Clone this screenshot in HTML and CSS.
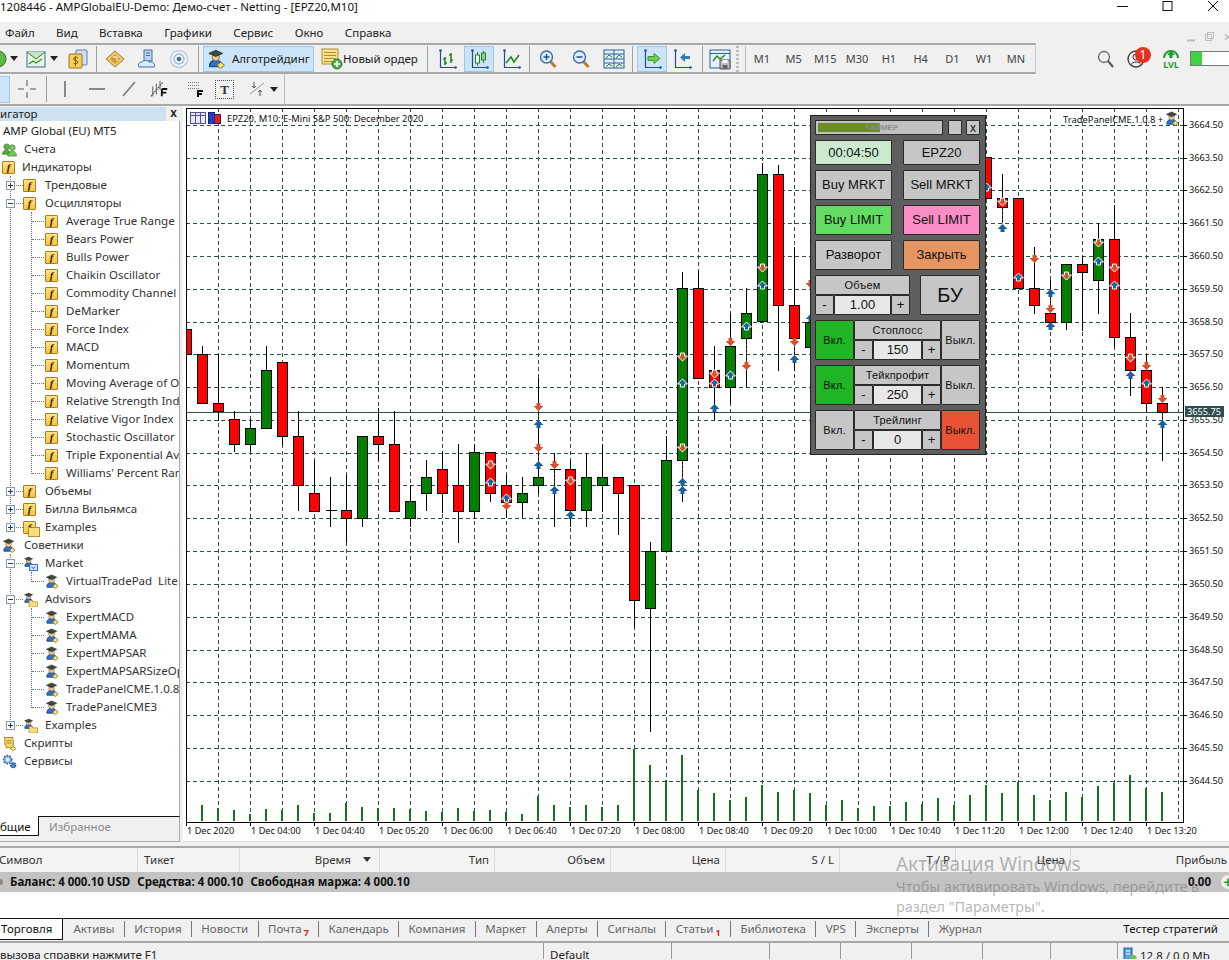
FILE: index.html
```html
<!DOCTYPE html>
<html lang="ru">
<head>
<meta charset="utf-8">
<title>MetaTrader 5</title>
<link rel="stylesheet" href="styles.css">
</head>
<body>
<svg class="defs" aria-hidden="true">
  <symbol id="axes" viewBox="0 0 20 20"><path d="M3.500 1v17.500H19" fill="none" stroke="#1d4f9a" stroke-width="1.200"/><circle cx="3.500" cy="1.500" r="1.300" fill="#1d4f9a"/><circle cx="18.500" cy="18.500" r="1.300" fill="#1d4f9a"/></symbol>
  <symbol id="hat" viewBox="0 0 16 16"><path d="M2 14c0-4 2-5 5-5s5 1 5 5z" fill="#2f6fc4" stroke="#1c4788"/><circle cx="7" cy="6.500" r="3" fill="#e8c9a0" stroke="#7a5a3a" stroke-width=".6"/><path d="M1.500 3.500 7 1l5.500 2.500L7 6z" fill="#3d4a3d" stroke="#202820" stroke-width=".6"/><path d="M11 10.500l3 2.500-3 2.500-3-2.500z" fill="#f6e27a" stroke="#8a7420" stroke-width=".8"/></symbol>
  <symbol id="hatfolder" viewBox="0 0 16 16"><path d="M2 11c0-3 2-4 4-4s4 1 4 4z" fill="#2f6fc4" stroke="#1c4788"/><circle cx="6" cy="5" r="2.500" fill="#e8c9a0" stroke="#7a5a3a" stroke-width=".6"/><path d="M1 3 6 .8 11 3 6 5.200z" fill="#3d4a3d"/><path d="M6.500 9h3l1 1.500h5V16h-9z" fill="#f7dc7c" stroke="#b08f30" stroke-width=".8"/></symbol>
  <symbol id="hatcal" viewBox="0 0 16 16"><path d="M2 11c0-3 2-4 4-4s4 1 4 4z" fill="#2f6fc4" stroke="#1c4788"/><circle cx="6" cy="5" r="2.500" fill="#e8c9a0" stroke="#7a5a3a" stroke-width=".6"/><path d="M1 3 6 .8 11 3 6 5.200z" fill="#3d4a3d"/><rect x="7" y="9" width="8.500" height="6.500" fill="#cfe4f7" stroke="#2f6fc4"/><path d="M9 11.500l2 2 2-2" fill="none" stroke="#1c4788"/></symbol>
  <symbol id="people" viewBox="0 0 16 16"><circle cx="5" cy="5" r="3" fill="#62b04a" stroke="#2f7a22" stroke-width=".7"/><circle cx="11" cy="6" r="3" fill="#7cc85c" stroke="#2f7a22" stroke-width=".7"/><path d="M0.500 13c0-3 2-4.500 4.500-4.500S9 10 9 13z" fill="#5aa842" stroke="#2f7a22" stroke-width=".7"/><path d="M6 15c0-3 2.500-5 5-5s4.500 2 4.500 5z" fill="#79c65a" stroke="#2f7a22" stroke-width=".7"/></symbol>
  <symbol id="scroll" viewBox="0 0 16 16"><path d="M2 1.500h10c-1 1-1 2 0 3v8H4c1-1 1-2 0-3H3V4C3 3 3 2 2 1.500z" fill="#f5d76a" stroke="#a27f1e"/><path d="M5 5h5M5 7.500h5" stroke="#a27f1e"/><path d="M12 11l3 2.500-3 2.500-3-2.500z" fill="#f6e27a" stroke="#8a7420" stroke-width=".8"/></symbol>
  <symbol id="gears" viewBox="0 0 16 16"><circle cx="6" cy="6" r="4.200" fill="#9ec6ea" stroke="#2a64a8" stroke-width="1.800" stroke-dasharray="2 1"/><circle cx="6" cy="6" r="1.500" fill="#fff"/><circle cx="12" cy="12" r="2.700" fill="#4a86c8" stroke="#1c4f94" stroke-width="1.300" stroke-dasharray="1.500 .8"/></symbol>
  <symbol id="magnifier" viewBox="0 0 20 20"><path d="M12 12l5.500 6" stroke="#c07a30" stroke-width="3"/><circle cx="8.500" cy="8" r="6" fill="#dcecf9" stroke="#3a6ea8" stroke-width="1.400"/></symbol>
</svg>

<header class="chrome">
  <div class="titlebar">
    <span class="title">1208446 - AMPGlobalEU-Demo: Демо-счет - Netting - [EPZ20,M10]</span>
    <div class="winbtns">
      <svg class="winbtn" viewBox="0 0 45 12"><path d="M17 6.500h11" stroke="#111"/></svg>
      <svg class="winbtn" viewBox="0 0 45 12"><rect x="18" y="1.500" width="9" height="9" fill="none" stroke="#111"/></svg>
      <svg class="winbtn" viewBox="0 0 45 12"><path d="M18 1l10 10M28 1 18 11" stroke="#111"/></svg>
    </div>
  </div>
  <nav class="menubar">
    <span>Файл</span><span>Вид</span><span>Вставка</span><span>Графики</span><span>Сервис</span><span>Окно</span><span>Справка</span>
    <svg class="mdi" viewBox="0 0 48 10"><path d="M0 8.500h8" stroke="#bdbdbd" stroke-width="2"/><rect x="18.500" y="2.500" width="6" height="6" fill="none" stroke="#bdbdbd"/><rect x="20.500" y=".5" width="6" height="6" fill="none" stroke="#bdbdbd"/><path d="M38 2l6 6M44 2l-6 6" stroke="#bdbdbd" stroke-width="1.400"/></svg>
  </nav>

  <div class="row1">
    <div class="toolbar">
      <svg class="ic8" viewBox="12 0 8 20"><circle cx="10" cy="10" r="8" fill="#58b848" stroke="#2f7a22"/></svg>
      <span class="drop ml2"></span>
      <svg class="ic20 ml8" viewBox="0 0 20 20"><rect x="1" y="3" width="18" height="15" fill="#e8f2e8" stroke="#2f7a8a"/><path d="M1 3l9 7 9-7" fill="#c8e4c4" stroke="#2f7a22"/><path d="M3 15l4-3 3 2 6-4" fill="none" stroke="#2f9a22" stroke-width="1.400"/></svg>
      <span class="drop ml4"></span>
      <svg class="ic20 ml10" viewBox="0 0 20 20"><rect x="8" y="1" width="11" height="15" rx="1" fill="#cfe0f4" stroke="#5a80b0"/><rect x="1" y="5" width="13" height="14" rx="1" fill="#f7cf5a" stroke="#9a7418"/><path d="M7.500 7v10M10 9c-1-1-4.500-1-4.500 1s4.500 1 4.500 3-3.500 2-4.500 1" fill="none" stroke="#7a5a10"/></svg>
      <i class="sep ml8"></i>
      <svg class="ic20 ml8" viewBox="0 0 20 20"><path d="M1 10 10 2l9 8-9 8z" fill="#eccb72" stroke="#a27f1e"/><path d="M5 10l5-5 5 5-5 5z" fill="#d49a30"/><path d="M8 8h4v4" fill="none" stroke="#fff"/></svg>
      <svg class="ic20 ml12" viewBox="0 0 20 20"><rect x="7" y="1" width="8" height="11" fill="#bcd6f2" stroke="#3a6ea8"/><path d="M9 4h4M9 6.500h4" stroke="#3a6ea8"/><path d="M2 18c-2-3 1-5 3-5 1-2 6-2 7 0 3-1 7 2 5 5z" fill="#dcecf9" stroke="#3a6ea8"/></svg>
      <svg class="ic20 ml12" viewBox="0 0 20 20"><circle cx="10" cy="10" r="2.300" fill="#3a6ea8"/><circle cx="10" cy="10" r="5" fill="none" stroke="#9fbde0" stroke-width="1.300"/><circle cx="10" cy="10" r="8.500" fill="none" stroke="#b8cce4" stroke-width="1.300"/></svg>
      <i class="sep ml9"></i>
      <button class="algo ml4"><svg class="ic20" viewBox="0 0 16 16"><use href="#hat"/></svg>Алготрейдинг</button>
      <button class="order ml6"><svg class="ic22" viewBox="0 0 22 22"><rect x="1" y="1" width="16" height="15" fill="#f7e18a" stroke="#b08f30"/><path d="M3 4.500h12M3 7.500h12M3 10.500h12M3 13.500h8" stroke="#b08f30"/><circle cx="16" cy="16" r="5" fill="#4fae4f" stroke="#2c7a2c"/><path d="M16 13v6M13 16h6" stroke="#fff" stroke-width="1.600"/></svg>Новый ордер</button>
      <i class="sep ml10"></i>
      <svg class="ic20 ml9" viewBox="0 0 20 20"><use href="#axes"/><path d="M8 8v8M6 10h2M8 14h2M14 4v10M12 6h2M14 11h2" stroke="#1e8a1e" stroke-width="1.600" fill="none"/></svg>
      <span class="tool on ml7"><svg class="ic20" viewBox="0 0 20 20"><use href="#axes"/><path d="M8.500 3v14M14.500 2v12" stroke="#1e8a1e"/><rect x="6.500" y="6" width="4" height="8" fill="#fff" stroke="#1e8a1e"/><rect x="12.500" y="4" width="4" height="7" fill="#8fd08f" stroke="#1e8a1e"/></svg></span>
      <svg class="ic20 ml7" viewBox="0 0 20 20"><use href="#axes"/><path d="M5 14l5-6 3 5 5-7" stroke="#1e8a1e" stroke-width="1.600" fill="none"/></svg>
      <i class="sep ml8"></i>
      <svg class="ic20 ml8" viewBox="0 0 20 20"><use href="#magnifier"/><path d="M8.500 5v6M5.500 8h6" stroke="#1d4f9a" stroke-width="1.500"/></svg>
      <svg class="ic20 ml13" viewBox="0 0 20 20"><use href="#magnifier"/><path d="M5.500 8h6" stroke="#1d4f9a" stroke-width="1.500"/></svg>
      <svg class="ic22 ml12" viewBox="0 0 22 22"><rect x="1" y="2" width="20" height="18" fill="#e6f0fa" stroke="#2f5f9a"/><path d="M11 2v18M1 11h20M1 6h20M1 15h20" stroke="#2f5f9a"/><path d="M3 10l3-3 3 2M13 10l3-3 3 2M3 19l3-3 3 2M13 19l3-3 3 2" fill="none" stroke="#1e8a1e"/></svg>
      <i class="sep ml7"></i>
      <span class="tool on ml4"><svg class="ic20" viewBox="0 0 20 20"><use href="#axes"/><path d="M6 7.500h6V4.500l6 5-6 5v-3H6z" fill="#6fcf4f" stroke="#3a9a2a"/></svg></span>
      <svg class="ic20 ml5" viewBox="0 0 20 20"><use href="#axes"/><path d="M18 7h-5V4l-5 4.500 5 4.500v-3h5z" fill="#2f7cc4"/></svg>
      <i class="sep ml10"></i>
      <svg class="ic22 ml6" viewBox="0 0 22 22"><rect x="1" y="2" width="20" height="18" fill="#e6f0fa" stroke="#2f5f9a"/><path d="M1 5.500h20" stroke="#2f5f9a"/><path d="M4 13l4-5 3 3 5-4" fill="none" stroke="#1e8a1e" stroke-width="1.400"/><path d="M11 12h10v9H11z" fill="#bdbdbd" stroke="#555"/><rect x="13.500" y="12" width="5" height="3" fill="#fff"/><rect x="13.500" y="17" width="5" height="4" fill="#666"/></svg>
      <i class="grip ml5"></i>
      <div class="periods"><span>M1</span><span>M5</span><span>M15</span><span>M30</span><span>H1</span><span>H4</span><span>D1</span><span>W1</span><span>MN</span></div>
    </div>
    <div class="statusicons">
      <svg class="ic18" viewBox="0 0 18 18"><circle cx="7" cy="7" r="5.500" fill="none" stroke="#666" stroke-width="1.300"/><path d="M11 11l5 6" stroke="#555" stroke-width="2"/></svg>
      <div class="user">
        <svg class="ic18" viewBox="0 0 18 18"><circle cx="9" cy="9" r="8" fill="none" stroke="#333" stroke-width="1.300"/><circle cx="9" cy="7" r="3" fill="none" stroke="#333"/><path d="M4 15c1-4 9-4 10 0" fill="none" stroke="#333"/></svg>
        <span class="badge">1</span>
      </div>
      <div class="lvl"><svg class="ic18h" viewBox="0 0 18 12"><path d="M2 10a7 7 0 0 1 14 0" fill="none" stroke="#17a02c" stroke-width="2"/><path d="M9 3l4 4h-2.500v3h-3V7H5z" fill="#17a02c"/></svg><span>LVL</span></div>
      <div class="progress"><i></i></div>
    </div>
  </div>

  <div class="row2">
    <div class="toolbar2">
      <span class="selstub"></span>
      <svg class="ic20 ml7" viewBox="0 0 20 20"><path d="M10 1v6M10 13v6M1 10h6M13 10h6" stroke="#555"/></svg>
      <i class="sep ml9"></i>
      <svg class="ic20 ml8" viewBox="0 0 20 20"><path d="M10 2v16" stroke="#666" stroke-width="1.500"/></svg>
      <svg class="ic20 ml12" viewBox="0 0 20 20"><path d="M2 10h16" stroke="#666" stroke-width="1.500"/></svg>
      <svg class="ic20 ml12" viewBox="0 0 20 20"><path d="M4 17 16 3" stroke="#777" stroke-width="1.500"/></svg>
      <svg class="ic20 ml11" viewBox="0 0 22 20"><path d="M1 18 14 3" stroke="#555" stroke-width="1.300" stroke-dasharray="2 1"/><path d="M3 7v11M7 4v12M11 1v10" stroke="#555"/><path d="M13 10h6M13 14h5M13 10v8M13 18h0" stroke="#111" stroke-width="2"/></svg>
      <svg class="ic20 ml16" viewBox="0 0 20 20"><path d="M2 3.500h12M2 6.500h12M2 9.500h12" stroke="#777" stroke-dasharray="1 1"/><path d="M11 12h6M11 15h5M12 12v6" stroke="#111" stroke-width="2" fill="none"/></svg>
      <span class="textic ml9">T</span>
      <svg class="ic18 ml14" viewBox="0 0 18 18"><path d="M2 14 16 3" stroke="#999"/><path d="M6 2v6M4 6l2 2 2-2" fill="none" stroke="#555"/><path d="M12 16v-6M10 12l2-2 2 2" fill="none" stroke="#555"/></svg>
      <span class="drop ml4"></span>
    </div>
  </div>
</header>

<main class="main">
  <aside class="navigator">
    <div class="navhead"><span class="navtitle">игатор</span><b class="navclose">x</b></div>
    <div class="tree">
      <div class="r root">AMP Global (EU) MT5</div>
      <div class="r r0"><svg class="ti"><use href="#people"/></svg>Счета</div>
      <div class="r r0"><i class="fi"></i>Индикаторы</div>
      <div class="branch">
        <div class="r r1"><i class="exp plus"></i><i class="fi"></i>Трендовые</div>
        <div class="r r1"><i class="exp"></i><i class="fi"></i>Осцилляторы</div>
        <div class="sub">
          <div class="r r2"><i class="fi"></i>Average True Range</div>
          <div class="r r2"><i class="fi"></i>Bears Power</div>
          <div class="r r2"><i class="fi"></i>Bulls Power</div>
          <div class="r r2"><i class="fi"></i>Chaikin Oscillator</div>
          <div class="r r2"><i class="fi"></i>Commodity Channel Index</div>
          <div class="r r2"><i class="fi"></i>DeMarker</div>
          <div class="r r2"><i class="fi"></i>Force Index</div>
          <div class="r r2"><i class="fi"></i>MACD</div>
          <div class="r r2"><i class="fi"></i>Momentum</div>
          <div class="r r2"><i class="fi"></i>Moving Average of Oscillator</div>
          <div class="r r2"><i class="fi"></i>Relative Strength Index</div>
          <div class="r r2"><i class="fi"></i>Relative Vigor Index</div>
          <div class="r r2"><i class="fi"></i>Stochastic Oscillator</div>
          <div class="r r2"><i class="fi"></i>Triple Exponential Average</div>
          <div class="r r2"><i class="fi"></i>Williams' Percent Range</div>
        </div>
        <div class="r r1"><i class="exp plus"></i><i class="fi"></i>Объемы</div>
        <div class="r r1"><i class="exp plus"></i><i class="fi"></i>Билла Вильямса</div>
        <div class="r r1"><i class="exp plus"></i><i class="fi fold"></i>Examples</div>
      </div>
      <div class="r r0"><svg class="ti"><use href="#hat"/></svg>Советники</div>
      <div class="branch">
        <div class="r r1"><i class="exp"></i><svg class="ti"><use href="#hatcal"/></svg>Market</div>
        <div class="sub">
          <div class="r r2"><svg class="ti"><use href="#hat"/></svg>VirtualTradePad&nbsp; Lite</div>
        </div>
        <div class="r r1"><i class="exp"></i><svg class="ti"><use href="#hatfolder"/></svg>Advisors</div>
        <div class="sub">
          <div class="r r2"><svg class="ti"><use href="#hat"/></svg>ExpertMACD</div>
          <div class="r r2"><svg class="ti"><use href="#hat"/></svg>ExpertMAMA</div>
          <div class="r r2"><svg class="ti"><use href="#hat"/></svg>ExpertMAPSAR</div>
          <div class="r r2"><svg class="ti"><use href="#hat"/></svg>ExpertMAPSARSizeOptimized</div>
          <div class="r r2"><svg class="ti"><use href="#hat"/></svg>TradePanelCME.1.0.8</div>
          <div class="r r2"><svg class="ti"><use href="#hat"/></svg>TradePanelCME3</div>
        </div>
        <div class="r r1"><i class="exp plus"></i><svg class="ti"><use href="#hatfolder"/></svg>Examples</div>
      </div>
      <div class="r r0"><svg class="ti"><use href="#scroll"/></svg>Скрипты</div>
      <div class="r r0"><svg class="ti"><use href="#gears"/></svg>Сервисы</div>
    </div>
    <div class="navtabs"><span class="navtab on">бщие</span><span class="navtab">Избранное</span></div>
  </aside>

  <section class="chartwrap">
    <svg id="chart" class="chart" viewBox="183 106 1046 736" xmlns="http://www.w3.org/2000/svg"></svg>
    <div class="panel">
      <div class="p-head">
        <div class="p-timer"><i></i><span>ТАЙМЕР</span></div>
        <button class="p-btn p-sq"></button>
        <button class="p-btn p-sq">x</button>
      </div>
      <div class="p-two p-h25"><div class="p-btn mint">00:04:50</div><div class="p-btn">EPZ20</div></div>
      <div class="p-two p-h30"><div class="p-btn">Buy MRKT</div><div class="p-btn">Sell MRKT</div></div>
      <div class="p-two p-h30"><div class="p-btn green">Buy LIMIT</div><div class="p-btn pink">Sell LIMIT</div></div>
      <div class="p-two p-h30"><div class="p-btn">Разворот</div><div class="p-btn orange">Закрыть</div></div>
      <div class="p-vol">
        <div class="p-spin"><div class="p-btn p-small">Объем</div><div class="p-spinrow"><div class="p-btn">-</div><div class="p-btn val">1.00</div><div class="p-btn">+</div></div></div>
        <div class="p-btn p-bu">БУ</div>
      </div>
      <div class="p-risk">
        <div class="p-btn p-small vgreen">Вкл.</div>
        <div class="p-spin"><div class="p-btn p-small">Стоплосс</div><div class="p-spinrow"><div class="p-btn">-</div><div class="p-btn val">150</div><div class="p-btn">+</div></div></div>
        <div class="p-btn p-small">Выкл.</div>
      </div>
      <div class="p-risk">
        <div class="p-btn p-small vgreen">Вкл.</div>
        <div class="p-spin"><div class="p-btn p-small">Тейкпрофит</div><div class="p-spinrow"><div class="p-btn">-</div><div class="p-btn val">250</div><div class="p-btn">+</div></div></div>
        <div class="p-btn p-small">Выкл.</div>
      </div>
      <div class="p-risk">
        <div class="p-btn p-small">Вкл.</div>
        <div class="p-spin"><div class="p-btn p-small">Трейлинг</div><div class="p-spinrow"><div class="p-btn">-</div><div class="p-btn val">0</div><div class="p-btn">+</div></div></div>
        <div class="p-btn p-small vred">Выкл.</div>
      </div>
    </div>
  </section>
</main>

<footer class="bottom">
  <div class="thead">
    <span class="tl first">Символ</span><span class="tl">Тикет</span><span class="sorted">Время<i></i></span><span>Тип</span><span>Объем</span><span>Цена</span><span>S / L</span><span>T / P</span><span>Цена</span><span class="last">Прибыль</span>
  </div>
  <div class="balance">
    <i class="dot"></i><b>Баланс: 4 000.10 USD</b><b>Средства: 4 000.10</b><b>Свободная маржа: 4 000.10</b>
    <b class="profit">0.00</b><span class="plus-round">+</span>
  </div>
  <div class="blank"></div>
  <div class="tabs">
    <span class="tab sel">Торговля</span><span class="tab">Активы</span><span class="tab">История</span><span class="tab">Новости</span><span class="tab">Почта<sub>7</sub></span><span class="tab">Календарь</span><span class="tab">Компания</span><span class="tab">Маркет</span><span class="tab">Алерты</span><span class="tab">Сигналы</span><span class="tab">Статьи<sub>1</sub></span><span class="tab">Библиотека</span><span class="tab">VPS</span><span class="tab">Эксперты</span><span class="tab nosep">Журнал</span>
    <span class="tester">Тестер стратегий</span>
  </div>
  <div class="status">
    <span class="s-help">вызова справки нажмите F1</span><span class="s-def">Default</span><span class="s-a"></span><span class="s-b"></span><span class="s-c"></span><span class="s-c"></span><span class="s-d"></span><span class="s-e"></span>
    <span class="s-mem"><svg class="ic14" viewBox="0 0 14 14"><rect x="1" y="1" width="8" height="12" fill="#5aa0e0" stroke="#1c5a9a"/><path d="M3 4h4M3 7h4" stroke="#fff"/><circle cx="10.500" cy="11" r="3" fill="#6fc04f"/></svg>12.8 / 0.0 Mb</span>
  </div>
  <div class="activation">
    <div class="a-big">Активация Windows</div>
    <div class="a-small">Чтобы активировать Windows, перейдите в<br>раздел "Параметры".</div>
  </div>
</footer>
<script src="chart.js"></script>
</body>
</html>
```

FILE: styles.css
```css
* { box-sizing: border-box; }
html, body { margin: 0; height: 960px; }
body {
  width: 1229px;
  overflow: hidden;
  display: flex;
  flex-direction: column;
  background: #f0f0f0;
  color: #1a1a1a;
  font: 11.500px/16px "Noto Sans", "Liberation Sans", sans-serif;
}
.defs { position: absolute; width: 0; height: 0; }
button { font: inherit; color: inherit; padding: 0; }
i { font-style: normal; display: block; flex: none; }
svg { flex: none; display: block; }

.ml2 { margin-left: 2px; } .ml4 { margin-left: 4px; } .ml5 { margin-left: 5px; }
.ml6 { margin-left: 6px; } .ml7 { margin-left: 7px; } .ml8 { margin-left: 8px; }
.ml9 { margin-left: 9px; } .ml10 { margin-left: 10px; } .ml11 { margin-left: 11px; }
.ml12 { margin-left: 12px; } .ml13 { margin-left: 13px; } .ml14 { margin-left: 14px; }
.ml16 { margin-left: 16px; }

.ic8 { width: 8px; height: 20px; }
.ic14 { width: 14px; height: 14px; }
.ic18 { width: 18px; height: 18px; }
.ic18h { width: 18px; height: 12px; }
.ic20 { width: 20px; height: 20px; }
.ic22 { width: 22px; height: 22px; }

/* window chrome */
.chrome { flex: none; height: 106px; }
.titlebar { height: 22px; background: #fff; display: flex; justify-content: space-between; }
.title { line-height: 14px; color: #111; white-space: nowrap; }
.winbtns { display: flex; margin-right: -6px; }
.winbtn { width: 45px; height: 12px; }
.menubar { height: 21px; display: flex; align-items: center; gap: 21.400px; padding-left: 5px; color: #222; }
.mdi { width: 48px; height: 10px; margin-left: auto; margin-top: 8px; margin-right: -6px; }
.row1 { height: 31px; display: flex; justify-content: space-between; }
.toolbar {
  width: 1036px; display: flex; align-items: center;
  border-bottom: 2px solid #a8a8a8; border-right: 1px solid #c8c8c8;
  border-top: 2px solid #a8a8a8;
}
.drop { flex: none; width: 0; height: 0; border: 4px solid transparent; border-top: 5px solid #222; border-bottom: 0; }
.sep { width: 1px; height: 26px; background: #a0a0a0; }
.algo, .order { flex: none; height: 26px; display: flex; align-items: center; border: 1px solid transparent; background: none; white-space: nowrap; }
.algo { width: 111px; padding-left: 3px; gap: 5px; background: #cce4f7; border-color: #9ac8ee; }
.order { width: 97px; gap: 0; }
.tool { flex: none; width: 30px; height: 26px; display: flex; align-items: center; justify-content: center; }
.tool.on { background: #cce4f7; border: 1px solid #9ac8ee; }
.grip { width: 3px; height: 26px; background: repeating-linear-gradient(#bbb 0 2px, transparent 2px 4px); }
.periods { display: flex; margin-left: 6px; border-left: 1px solid #bbb; height: 26px; align-items: center; color: #444; font-size: 11px; }
.periods span { width: 31.750px; text-align: center; }
.statusicons { display: flex; align-items: center; }
.user { position: relative; width: 26px; margin-left: 12px; }
.badge { position: absolute; left: 8px; top: -3px; width: 16px; height: 16px; border-radius: 50%; background: #e0341c; color: #fff; text-align: center; font-size: 12px; line-height: 16px; }
.lvl { width: 18px; margin-left: 9px; color: #17a02c; font-size: 9px; line-height: 9px; font-weight: 700; text-align: center; }
.progress { width: 39px; height: 15px; margin-left: 10px; background: #fff; border: 1px solid #777; border-right: 0; }
.progress i { width: 11px; height: 100%; background: #42d13e; }
.row2 { height: 32px; border-bottom: 2px solid #a8a8a8; }
.toolbar2 { width: 285px; height: 30px; display: flex; align-items: center; border-right: 1px solid #bbb; }
.selstub { flex: none; width: 10px; height: 27px; background: #cce4f7; border: 1px solid #9ac8ee; border-left: 0; }
.textic { flex: none; width: 19px; height: 19px; text-align: center; border: 1px dotted #555; font: 700 13px/17px "Liberation Serif", serif; color: #333; }

/* main */
.main { flex: none; height: 736px; display: flex; }
.navigator { width: 183px; display: flex; flex-direction: column; background: #f0f0f0; border-right: 3px solid #f0f0f0; }
.navhead { height: 14px; display: flex; justify-content: space-between; padding-right: 3px; margin-top: 1px; }
.navtitle { width: 166px; background: #cfe0ee; line-height: 13px; color: #222; }
.navclose { font: 700 12px/12px "Liberation Sans", sans-serif; }
.tree { flex: 1; width: 180px; background: #fff; padding-top: 1px; overflow: hidden; border-right: 1px solid #a8a8a8; color: #333; white-space: nowrap; }
.r { height: 18px; line-height: 18px; position: relative; display: flex; align-items: center; }
.root { padding-left: 3px; color: #222; }
.r0 { padding-left: 2px; gap: 7px; }
.branch { margin-left: 10px; border-left: 1px dotted #777; }
.sub { margin-left: 20px; border-left: 1px dotted #777; }
.r1 { padding-left: 12px; gap: 9px; }
.r2 { padding-left: 13px; gap: 8px; }
.r1 .ti, .r2 .ti { margin-right: -2px; }
.r1::before, .r2::before { content: ""; position: absolute; left: 0; top: 9px; width: 12px; border-top: 1px dotted #777; }
.branch > .r1:last-child::after, .sub > .r2:last-child::after { content: ""; position: absolute; left: -1px; top: 10px; height: 8px; width: 1px; background: #fff; }
.exp { position: absolute; left: -5px; top: 5px; width: 9px; height: 9px; background: #fff; border: 1px solid #8a9aa8; z-index: 1; }
.exp::before { content: ""; position: absolute; left: 1px; right: 1px; top: 3px; height: 1px; background: #223a6a; }
.exp.plus::after { content: ""; position: absolute; top: 1px; bottom: 1px; left: 3px; width: 1px; background: #223a6a; }
.ti { width: 15px; height: 15px; }
.fi { width: 13px; height: 13px; background: linear-gradient(#ffe48a, #f7c33c); border: 1px solid #a8801e; border-radius: 1px; position: relative; }
.fi::before { content: "f"; position: absolute; inset: -1px 0 0; font: italic 700 11px/12px "Liberation Serif", serif; text-align: center; color: #3a2a00; }
.fi.fold::after { content: ""; position: absolute; right: -5px; bottom: -4px; width: 10px; height: 8px; background: #f7dc7c; border: 1px solid #b08f30; }
.navtabs { height: 26px; width: 180px; flex: none; background: #f0f0f0; display: flex; border-top: 1px solid #111; border-right: 1px solid #a8a8a8; border-bottom: 1px solid #a8a8a8; gap: 10px; padding-bottom: 5px; }
.navtab { line-height: 19px; color: #888; }
.navtab.on { width: 39px; background: #fff; color: #111; border-right: 1px solid #111; border-bottom: 1px solid #111; margin-top: -1px; padding-top: 1px; }

.chartwrap { flex: 1; position: relative; background: #fff; border-bottom: 1px solid #ddd; }
.chart { width: 1046px; height: 736px; }
.g { stroke: #2f4f4f; stroke-width: 1; stroke-dasharray: 4 3; shape-rendering: crispEdges; }
.bid { stroke: #2f4f4f; stroke-width: 1; shape-rendering: crispEdges; }
.frame { fill: none; stroke: #000; stroke-width: 1; shape-rendering: crispEdges; }
.wick { stroke: #000; stroke-width: 1; shape-rendering: crispEdges; }
.body-r { fill: #f00; stroke: #000; shape-rendering: crispEdges; }
.body-g { fill: #008000; stroke: #000; shape-rendering: crispEdges; }
.vol { fill: #17701f; shape-rendering: crispEdges; }
.sell { fill: #d8512c; }
.buy { fill: #16629f; }
.onbody { stroke: #fff; stroke-width: 1; }
.lnk { stroke: #d8512c; stroke-width: 1; stroke-dasharray: 2 2; opacity: .5; }
.axis { font: 9.200px "Noto Sans", sans-serif; fill: #111; }
.info { font: 9.400px "Noto Sans", sans-serif; fill: #111; }
.pricetag { fill: #2f4f4f; }
.pricetxt { font: 9.200px "Noto Sans", sans-serif; fill: #fff; }
.ig-a { fill: #e8e8f8; stroke: #5050a0; }
.ig-b { fill: #e02020; stroke: #202080; }
.ig-c { fill: #2040c0; stroke: #202080; }

/* trade panel */
.panel {
  position: absolute; left: 627px; top: 9px; width: 176px; height: 340px;
  background: #5e5e5e; border: 1px solid #222; padding: 4px 5px 0 4px;
  display: flex; flex-direction: column; gap: 5px;
  font: 13px/16px "Liberation Sans", sans-serif; color: #111;
}
.p-btn { display: flex; align-items: center; justify-content: center; background: #c6c6c6; border: 1px solid #2b2b2b; border-radius: 1px; min-width: 0; }
.p-head { height: 15px; display: flex; flex: none; }
.p-timer { width: 128px; margin-right: 5px; background: #c2c2c2; border: 1px solid #2b2b2b; padding: 2px; position: relative; }
.p-timer i { width: 62px; height: 100%; background: #6b8e23; }
.p-timer span { position: absolute; left: 49px; top: 2px; font: 700 8px/9px "Liberation Sans", sans-serif; color: #8c8c8c; }
.p-sq { width: 14px; height: 15px; font-size: 12px; line-height: 12px; }
.p-sq + .p-sq { margin-left: 4px; }
.p-two { display: grid; grid-template-columns: 77px 77px; gap: 11px; flex: none; }
.p-h25 { height: 25px; } .p-h30 { height: 30px; }
.mint { background: #cce9cf; }
.green { background: #62dd62; }
.pink { background: #fb8dc6; }
.orange { background: #e5955f; }
.p-vol { display: flex; height: 40px; flex: none; gap: 10px; }
.p-vol .p-spin { width: 95px; }
.p-bu { width: 60px; font-size: 20px; }
.p-spin { display: grid; grid-template-rows: 1fr 1fr; }
.p-spinrow { display: grid; grid-template-columns: 19px 1fr 19px; }
.val { background: #e8e8e8; }
.p-small { font-size: 11px; letter-spacing: .2px; }
.p-risk { display: grid; grid-template-columns: 39px 1fr 39px; height: 40px; flex: none; }
.vgreen { background: #1fb524; }
.vred { background: #e95235; }

/* bottom */
.bottom { flex: none; height: 118px; position: relative; display: flex; flex-direction: column; border-top: 4px solid #f0f0f0; }
.thead { height: 26px; background: #f3f3f3; border-top: 2px solid #a8a8a8; display: grid; grid-template-columns: 138px 102px 140px 115px 116px 115px 114px 116px 115px 158px; line-height: 23px; color: #333; }
.thead span { text-align: right; padding-right: 5px; border-right: 1px solid #dcdcdc; }
.thead .tl { text-align: left; padding-left: 6px; }
.thead .first { padding-left: 0; margin-left: -1px; }
.thead .last { border-right: 0; padding-right: 2px; }
.sorted { position: relative; padding-right: 28px !important; }
.sorted i { position: absolute; right: 8px; top: 9px; width: 0; height: 0; border: 4px solid transparent; border-top: 5px solid #333; border-bottom: 0; }
.balance { height: 20px; background: #c3c3c3; display: flex; align-items: center; color: #111; gap: 7px; padding-left: 10px; position: relative; white-space: nowrap; }
.balance b { font-weight: 700; }
.dot { position: absolute; left: -3px; top: 7px; width: 6px; height: 6px; border-radius: 50%; background: #888; }
.profit { margin-left: auto; }
.plus-round { flex: none; width: 14px; height: 14px; margin-left: 3px; margin-right: -6px; border-radius: 50%; background: #eee; color: #22a022; font: 700 15px/13px "Liberation Sans", sans-serif; text-align: center; }
.blank { height: 26px; background: #fff; }
.tabs { height: 25px; background: #f0f0f0; border-top: 1px solid #111; border-bottom: 2px solid #a8a8a8; display: flex; align-items: flex-start; color: #666; position: relative; white-space: nowrap; }
.tab { position: relative; padding: 0 9.400px; margin-top: 2px; height: 16px; line-height: 16px; border-right: 1px solid #777; }
.tab sub { color: #e02020; font-size: 9px; line-height: 0; margin-left: 2px; font-weight: 700; }
.tab.sel { color: #111; background: #fff; border: 0; border-right: 1px solid #111; border-bottom: 1px solid #111; margin-top: 0; margin-right: 1px; height: 21px; padding: 2px 0 0 1px; width: 63px; }
.tab.nosep { border-right: 0; }
.tester { margin-left: auto; margin-top: 2px; margin-right: 11px; color: #111; }
.status { height: 16px; display: flex; color: #222; line-height: 24px; white-space: nowrap; overflow: hidden; }
.status span { border-right: 1px solid #999; height: 16px; flex: none; }
.s-help { width: 544px; }
.s-def { width: 128px; padding-left: 6px; }
.s-a { width: 98px; } .s-b { width: 71px; } .s-c { width: 71px; } .s-d { width: 68px; } .s-e { width: 67px; }
.status .s-mem { border: 0; display: flex; align-items: flex-start; gap: 3px; padding: 4px 0 0 5px; line-height: 18px; }
.activation { position: absolute; left: 896px; top: 5px; color: rgba(110, 110, 110, .5); pointer-events: none; white-space: nowrap; }
.a-big { font-size: 19px; line-height: 26px; }
.a-small { font-size: 14.400px; line-height: 20px; }
```

FILE: chart.js
```js
(function () {
  var svg = document.getElementById('chart');
  var out = [];
  function cx(i) { return 186 + 16 * i; }
  var LEFT = 186, RIGHT = 1183, TOP = 108, BOTTOM = 822;

  /* horizontal grid + price axis */
  for (var n = 0; n <= 20; n++) {
    var y = Math.round(124.7 + 32.8 * n);
    var price = (3664.5 - n).toFixed(2);
    out.push('<path class="g" d="M' + LEFT + ' ' + (y + .5) + 'H' + RIGHT + '"/>');
    out.push('<path class="wick" d="M' + RIGHT + ' ' + (y + .5) + 'h4"/>');
    out.push('<text class="axis" x="1189" y="' + (y + 3) + '">' + price + '</text>');
  }
  /* vertical grid */
  for (var i = 2; i <= 62; i += 2) {
    out.push('<path class="g" d="M' + (cx(i) + .5) + ' ' + TOP + 'V' + BOTTOM + '"/>');
  }
  out.push('<path class="bid" d="M' + LEFT + ' 412.5H' + RIGHT + '"/>');

  /* volumes */
  var vols = [0, 16, 13, 11, 7, 12, 11, 16, 8, 8, 18, 14, 13, 13, 12, 10, 9, 13, 10, 11, 9, 7, 25, 16, 14, 16, 14, 16, 72, 56, 41, 66, 31, 28, 21, 24, 36, 29, 31, 28, 16, 21, 13, 15, 15, 19, 17, 23, 16, 26, 36, 28, 39, 26, 21, 29, 24, 35, 38, 46, 33, 29];
  vols.forEach(function (v, i) {
    if (v) out.push('<rect class="vol" x="' + (cx(i) - 1) + '" y="' + (821 - v) + '" width="2" height="' + v + '"/>');
  });

  /* i, wick top, body top, body bottom, wick bottom, colour, sells, buys */
  var C = [
    [0, 329, 329, 354, 354, 'r'],
    [1, 346, 354, 403, 403, 'r'],
    [2, 354, 403, 411, 421, 'r'],
    [3, 411, 419, 444, 452, 'r'],
    [4, 419, 428, 444, 452, 'g'],
    [5, 346, 370, 428, 428, 'g'],
    [6, 362, 362, 436, 445, 'r'],
    [7, 411, 436, 485, 511, 'r'],
    [8, 460, 493, 511, 511, 'r'],
    [9, 477, 510, 510, 527, 'd'],
    [10, 475, 510, 518, 543, 'r'],
    [11, 436, 436, 518, 527, 'g'],
    [12, 408, 436, 444, 461, 'r'],
    [13, 411, 444, 511, 511, 'r'],
    [14, 485, 501, 518, 527, 'g'],
    [15, 460, 477, 493, 511, 'g'],
    [16, 451, 469, 493, 513, 'r'],
    [17, 444, 485, 511, 543, 'r'],
    [18, 444, 452, 511, 519, 'g'],
    [19, 452, 452, 493, 502, 'r', [465], [482]],
    [20, 475, 485, 502, 518, 'r', [506], [498]],
    [21, 477, 493, 502, 518, 'g'],
    [22, 378, 477, 485, 494, 'g', [407, 448], [424, 465]],
    [23, 453, 469, 469, 527, 'd', [465], [490]],
    [24, 460, 469, 510, 527, 'r', [481], [515]],
    [25, 453, 477, 510, 527, 'g'],
    [26, 444, 477, 485, 512, 'g'],
    [27, 477, 477, 493, 535, 'r'],
    [28, 485, 485, 600, 628, 'r'],
    [29, 542, 551, 608, 732, 'g'],
    [30, 436, 460, 551, 551, 'g'],
    [31, 272, 288, 460, 502, 'g', [357, 448], [383, 482, 490]],
    [32, 271, 288, 378, 378, 'r'],
    [33, 346, 370, 387, 420, 'r', [374], [383, 408]],
    [34, 313, 346, 387, 404, 'g', [342], [375]],
    [35, 288, 313, 338, 387, 'g', [366], [326]],
    [36, 163, 174, 321, 321, 'g', [268], [285]],
    [37, 165, 174, 305, 371, 'r'],
    [38, 247, 305, 338, 371, 'r', [342], [359]],
    [39, 322, 322, 347, 347, 'g', [284], [318]],
    [50, 157, 157, 198, 198, 'r', [], [187]],
    [51, 174, 198, 207, 223, 'r', [202], [228]],
    [52, 198, 198, 288, 288, 'r', [], [277]],
    [53, 247, 288, 305, 314, 'r', [259], []],
    [54, 280, 313, 322, 322, 'r', [309], [293, 326]],
    [55, 264, 264, 322, 330, 'g', [276], []],
    [56, 256, 264, 272, 331, 'r'],
    [57, 223, 239, 280, 314, 'g', [243], [261]],
    [58, 205, 239, 337, 347, 'r', [268], [285]],
    [59, 313, 337, 370, 396, 'r', [358], [375]],
    [60, 354, 370, 403, 412, 'r', [366], [383]],
    [61, 387, 403, 412, 461, 'r', [399], [424]]
  ];

  C.forEach(function (c) {
    var x = cx(c[0]) + .5;
    out.push('<path class="wick" d="M' + x + ' ' + c[1] + 'V' + c[4] + '"/>');
    if (c[5] === 'd') {
      out.push('<path class="wick" d="M' + (x - 5) + ' ' + (c[2] + .5) + 'h11"/>');
    } else {
      var left = Math.max(x - 5, LEFT + .5);
      out.push('<rect class="body-' + c[5] + '" x="' + left + '" y="' + (c[2] + .5) + '" width="' + (x + 5 - left) + '" height="' + (c[3] - c[2]) + '"/>');
    }
  });

  C.forEach(function (c) {
    var sells = c[6] || [], buys = c[7] || [], x = cx(c[0]) + .5;
    sells.forEach(function (s, k) {
      if (buys[k] !== undefined) out.push('<path class="lnk" d="M' + x + ' ' + s + 'V' + buys[k] + '"/>');
    });
    function cls(y) { return y >= c[2] && y <= c[3] ? ' onbody' : ''; }
    sells.forEach(function (y) {
      out.push('<path class="sell' + cls(y) + '" d="M' + (x - 2) + ' ' + (y - 4) + 'h4v3h3l-5 5-5-5h3z"/>');
    });
    buys.forEach(function (y) {
      out.push('<path class="buy' + cls(y) + '" d="M' + (x - 2) + ' ' + (y + 4) + 'h4v-3h3l-5-5-5 5h3z"/>');
    });
  });

  /* frame and time axis */
  out.push('<rect class="frame" x="' + (LEFT + .5) + '" y="' + (TOP + .5) + '" width="' + (RIGHT - LEFT) + '" height="' + (BOTTOM - TOP) + '"/>');
  var times = ['1 Dec 2020', '1 Dec 04:00', '1 Dec 04:40', '1 Dec 05:20', '1 Dec 06:00', '1 Dec 06:40', '1 Dec 07:20', '1 Dec 08:00', '1 Dec 08:40', '1 Dec 09:20', '1 Dec 10:00', '1 Dec 10:40', '1 Dec 11:20', '1 Dec 12:00', '1 Dec 12:40', '1 Dec 13:20'];
  times.forEach(function (t, k) {
    var x = 186 + 64 * k;
    out.push('<path class="wick" d="M' + (x + .5) + ' ' + BOTTOM + 'v4"/>');
    out.push('<text class="axis" x="' + (x + 1) + '" y="834">' + t + '</text>');
  });

  /* header */
  out.push('<rect class="ig-a" x="190.500" y="112.500" width="15" height="11"/><path class="ig-a" d="M190 115.500h16M195.500 113v10M200.500 113v10"/>');
  out.push('<rect class="ig-c" x="208.500" y="112.500" width="6" height="11"/><rect class="ig-b" x="214.500" y="114.500" width="6" height="9"/>');
  out.push('<text class="info" x="227" y="122">EPZ20, M10:  E-Mini S&amp;P 500: December 2020</text>');
  out.push('<text class="info" x="1063" y="123">TradePanelCME.1.0.8 +</text>');
  out.push('<use href="#hat" x="1165" y="111" width="15" height="15"/>');

  /* bid price tag */
  out.push('<rect class="pricetag" x="1185" y="406" width="39" height="11"/>');
  out.push('<text class="pricetxt" x="1187" y="415">3655.75</text>');

  svg.innerHTML = out.join('');
})();
```
